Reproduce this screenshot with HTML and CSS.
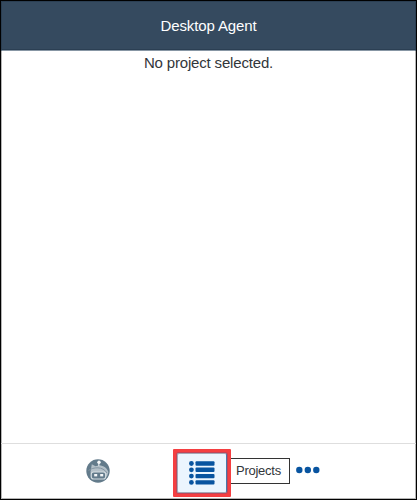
FILE: index.html
```html
<!DOCTYPE html>
<html lang="en">
<head>
<meta charset="utf-8">
<title>Desktop Agent</title>
<link rel="stylesheet" href="styles.css">
</head>
<body>
<div class="window">
  <header class="header"><span class="title">Desktop Agent</span></header>
  <main class="content"><span class="message">No project selected.</span></main>
  <footer class="toolbar">
    <button class="agent" aria-label="Agent">
      <svg width="24" height="24" viewBox="0 0 24 24">
        <circle cx="12" cy="12" r="11.7" fill="#637b8b"/>
        <path d="M4.5 13 5.8 5.2 9.5 7.2C15 5 21 8 22.4 13L21 17.5 6 20Z" fill="#b4c0c8"/>
        <path d="M2.5 11.5C7 8 17 7 21 14" fill="none" stroke="#8294a1" stroke-width="1"/>
        <path d="M12.8 4V7" stroke="#dce3e6" stroke-width="1.2"/>
        <circle cx="13" cy="3.2" r="1.7" fill="#f4f6f7"/>
        <rect x="5.2" y="13" width="14.5" height="7" rx="2.5" fill="#637b8b" stroke="#d4dce0" stroke-width="1.2"/>
        <rect x="8.2" y="15" width="3" height="2.4" fill="#f4f6f7"/>
        <rect x="14.2" y="15" width="3" height="2.4" fill="#f4f6f7"/>
      </svg>
    </button>
    <div class="projects">
      <button class="list" aria-label="Projects">
        <span class="face">
        <svg width="26" height="24" viewBox="0 0 26 24" fill="#0854a0">
          <circle cx="2.4" cy="2.5" r="2.4"/><rect x="6.5" y=".3" width="19" height="4.4" rx="1"/>
          <circle cx="2.4" cy="8.8" r="2.4"/><rect x="6.5" y="6.6" width="19" height="4.4" rx="1"/>
          <circle cx="2.4" cy="15.1" r="2.4"/><rect x="6.5" y="12.9" width="19" height="4.4" rx="1"/>
          <circle cx="2.4" cy="21.4" r="2.4"/><rect x="6.5" y="19.2" width="19" height="4.4" rx="1"/>
        </svg>
        </span>
      </button>
      <span class="tooltip">Projects</span>
    </div>
    <button class="more" aria-label="More">
      <svg width="24" height="8" viewBox="0 0 24 8" fill="#0854a0">
        <circle cx="3.3" cy="4" r="3.2"/><circle cx="11.8" cy="4" r="3.2"/><circle cx="20.3" cy="4" r="3.2"/>
      </svg>
    </button>
  </footer>
</div>
</body>
</html>
```
FILE: styles.css
```css
* { box-sizing: border-box; }
body { margin: 0; font-family: "Liberation Sans", Arial, sans-serif; }
button { margin: 0; padding: 0; border: 0; background: none; display: flex; align-items: center; justify-content: center; }
svg { display: block; }
.window {
  width: 417px;
  height: 500px;
  display: flex;
  flex-direction: column;
  border: 1px solid #000;
  background: #fff;
  box-shadow: inset 0 0 0 1px #b5b5b5;
}
.header {
  height: 50px;
  display: flex;
  align-items: center;
  justify-content: center;
  padding-bottom: 1px;
  background: #354a5f;
  border: 1px solid #2b3f53;
  border-bottom: 1px solid #8796a4;
  box-shadow: inset 0 -1px #2b3f53;
  color: #fff;
  font-size: 15px;
  letter-spacing: -0.12px;
}
.content {
  flex: 1;
  padding-top: 3px;
  text-align: center;
  color: #32363a;
  font-size: 15px;
  letter-spacing: -0.17px;
  line-height: 18px;
}
.toolbar {
  height: 56px;
  display: flex;
  align-items: center;
  border-top: 1px solid #dedede;
  padding-left: 85px;
}
.agent { width: 24px; height: 24px; margin-bottom: 1px; }
.projects { position: relative; margin: 2px 0 0 63px; }
.list {
  width: 58px;
  height: 48px;
  background: #f43f41;
  border: 4px solid #f43f41;
  border-radius: 1px;
  position: relative;
  z-index: 1;
}
.face {
  width: 50px;
  height: 40px;
  display: flex;
  align-items: center;
  justify-content: center;
  background: #ebf5fe;
  border: 1px solid #a5a7b5;
  border-right-color: #4a78a8;
  border-radius: 2px;
  box-shadow: 0 0 0 1px #c04558;
}
.tooltip {
  position: absolute;
  left: 56px;
  top: 9px;
  width: 61px;
  height: 26px;
  padding-left: 6px;
  border: 1px solid #333;
  background: #fff;
  color: #32363a;
  font-size: 13px;
  letter-spacing: -0.25px;
  line-height: 24px;
}
.more { width: 24px; height: 24px; margin: 0 0 3px 65px; }
```
